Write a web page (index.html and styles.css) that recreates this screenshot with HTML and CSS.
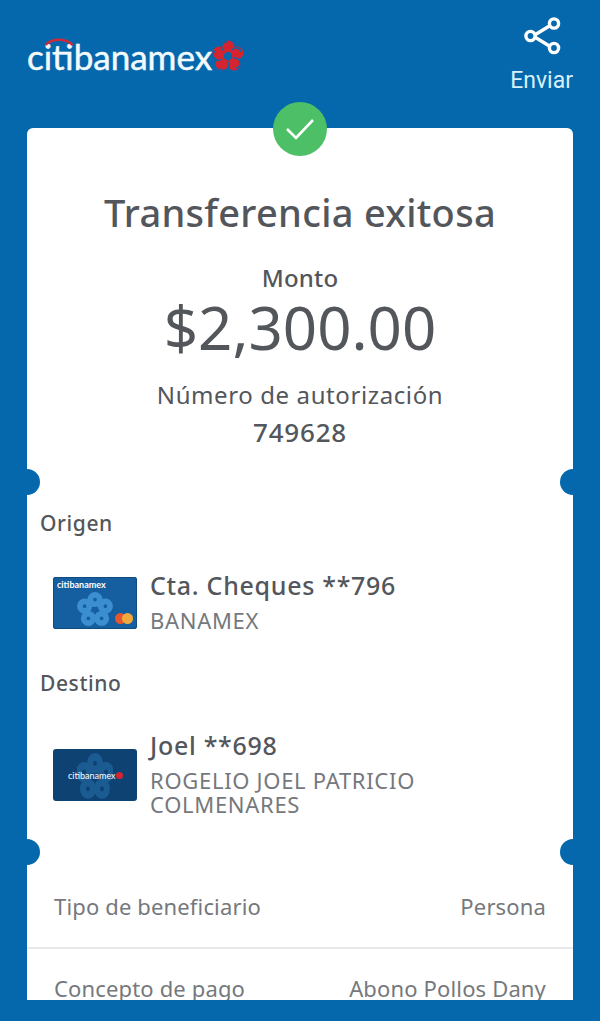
FILE: index.html
```html
<!DOCTYPE html>
<html lang="es">
<head>
    <meta charset="UTF-8">
    <title>Transferencia exitosa</title>
    <link rel="stylesheet" href="styles.css">
</head>
<body>
    <header class="top">
        <div class="logo">
            <svg class="logo-arc" width="30" height="9" viewBox="0 0 30 9"><path d="M1.5 8 C8 1 22 1 28.5 8" fill="none" stroke="#d2293a" stroke-width="2.4"/></svg>
            <span class="logo-text">citibanamex</span>
            <svg class="flower" width="32" height="32" viewBox="0 0 32 32">
                <g fill="#d5242f">
                    <circle cx="16" cy="7" r="6.4"/>
                    <circle cx="25" cy="13" r="6.4"/>
                    <circle cx="22" cy="24" r="6.4"/>
                    <circle cx="10" cy="24" r="6.4"/>
                    <circle cx="7" cy="13" r="6.4"/>
                </g>
                <circle cx="16" cy="16" r="4" fill="#0568ad"/>
                <g fill="none" stroke="#0568ad" stroke-width="1.3">
                    <path d="M16 2 A5 5 0 0 0 12 11"/>
                    <path d="M29 12 A5 5 0 0 0 20 10"/>
                    <path d="M24 28 A5 5 0 0 0 22 18"/>
                    <path d="M7 28 A5 5 0 0 0 16 22"/>
                    <path d="M3 11 A5 5 0 0 0 10 19"/>
                </g>
            </svg>
        </div>
        <div class="send">
            <svg width="40" height="40" viewBox="0 0 40 40" fill="none" stroke="#fff" stroke-width="3.4">
                <path d="M29 9 L11 20 L29 31"/>
                <circle cx="32" cy="7.5" r="4.6" fill="#0568ad"/>
                <circle cx="8.5" cy="20" r="4.6" fill="#0568ad"/>
                <circle cx="32" cy="32" r="4.6" fill="#0568ad"/>
            </svg>
            <span>Enviar</span>
        </div>
    </header>

    <main class="card-wrap">
        <div class="check">
            <svg width="32" height="26" viewBox="0 0 32 26"><path d="M3 13 L12 22 L29 4" fill="none" stroke="#fff" stroke-width="2.6"/></svg>
        </div>
        <span class="notch notch-l notch-1"></span>
        <span class="notch notch-r notch-1"></span>
        <span class="notch notch-l notch-2"></span>
        <span class="notch notch-r notch-2"></span>

        <div class="card">
            <section class="summary">
                <h1>Transferencia exitosa</h1>
                <p class="amount-label">Monto</p>
                <p class="amount">$2,300.00</p>
                <p class="auth-label">Número de autorización</p>
                <p class="auth-number">749628</p>
            </section>

            <section class="parties">
                <h2>Origen</h2>
                <div class="account">
                    <div class="bank-card bank-card-light">
                        <span class="bank-card-name">citibanamex</span>
                        <svg class="bank-card-flower" width="36" height="34" viewBox="0 0 36 36" fill="none" stroke="#3b8fd0" stroke-width="6">
                            <circle cx="18" cy="8" r="5"/>
                            <circle cx="29" cy="15" r="5"/>
                            <circle cx="25" cy="28" r="5"/>
                            <circle cx="11" cy="28" r="5"/>
                            <circle cx="7" cy="15" r="5"/>
                        </svg>
                        <span class="mc mc-red"></span>
                        <span class="mc mc-yellow"></span>
                    </div>
                    <div class="account-info">
                        <p class="account-name">Cta. Cheques **796</p>
                        <p class="account-owner">BANAMEX</p>
                    </div>
                </div>

                <h2>Destino</h2>
                <div class="account">
                    <div class="bank-card bank-card-dark">
                        <svg class="bank-card-flower" width="36" height="46" viewBox="0 0 36 36" preserveAspectRatio="none" fill="none" stroke="#1a5b92" stroke-width="6">
                            <circle cx="18" cy="8" r="5"/>
                            <circle cx="29" cy="15" r="5"/>
                            <circle cx="25" cy="28" r="5"/>
                            <circle cx="11" cy="28" r="5"/>
                            <circle cx="7" cy="15" r="5"/>
                        </svg>
                        <span class="bank-card-mark">citibanamex<i></i></span>
                    </div>
                    <div class="account-info">
                        <p class="account-name">Joel **698</p>
                        <p class="account-owner">ROGELIO JOEL PATRICIO COLMENARES</p>
                    </div>
                </div>
            </section>

            <section class="details">
                <div class="detail">
                    <span>Tipo de beneficiario</span>
                    <span>Persona</span>
                </div>
                <div class="detail">
                    <span>Concepto de pago</span>
                    <span>Abono Pollos Dany</span>
                </div>
            </section>
        </div>
    </main>
</body>
</html>
```

FILE: styles.css
```css
html, body {
    height: 100%;
}
body {
    margin: 0;
    background-color: #0568ad;
    font-family: 'Noto Sans', sans-serif;
    color: #53565b;
    overflow: hidden;
}
p, h1, h2 {
    margin: 0;
    font-weight: 400;
}
.top {
    height: 128px;
    box-sizing: border-box;
    padding: 0 27px;
    display: flex;
    justify-content: space-between;
    color: white;
}
.logo {
    position: relative;
    display: flex;
    align-items: center;
    height: 32px;
    margin-top: 40px;
}
.logo-arc {
    position: absolute;
    left: 17px;
    top: -3px;
}
.logo-text {
    font-family: 'Lato', sans-serif;
    font-size: 35px;
    font-weight: 400;
    -webkit-text-stroke: 0.5px #f2fafc;
    color: #f2fafc;
}
.flower {
    margin-left: 0;
}
.send {
    display: flex;
    flex-direction: column;
    align-items: center;
    padding-top: 16px;
    font-family: 'Roboto', sans-serif;
    font-size: 23px;
    line-height: 30px;
    color: #d8f0f8;
}
.send svg {
    display: block;
    margin-bottom: 10px;
}
.card-wrap {
    position: relative;
    margin: 0 27px;
}
.card {
    height: 872px;
    background-color: white;
    border-radius: 6px 6px 0 0;
    overflow: hidden;
}
.check {
    position: absolute;
    left: 246px;
    top: -26px;
    width: 54px;
    height: 54px;
    border-radius: 50%;
    background-color: #4dbf66;
    display: flex;
    align-items: center;
    justify-content: center;
}
.notch {
    position: absolute;
    width: 26px;
    height: 26px;
    border-radius: 50%;
    background-color: #0568ad;
}
.notch-l {
    left: -13px;
}
.notch-r {
    right: -13px;
}
.notch-1 {
    top: 341px;
}
.notch-2 {
    top: 711px;
}
.summary {
    text-align: center;
    padding-top: 59px;
}
.summary h1 {
    font-size: 38px;
    line-height: 50px;
    font-weight: 500;
    letter-spacing: 0.3px;
}
.amount-label {
    font-size: 24px;
    line-height: 32px;
    margin-top: 25px;
    font-weight: 500;
    letter-spacing: 0.2px;
}
.amount {
    font-size: 60px;
    line-height: 66px;
}
.auth-label {
    font-size: 24px;
    line-height: 32px;
    margin-top: 19px;
    letter-spacing: 0.6px;
}
.auth-number {
    font-size: 26px;
    line-height: 32px;
    margin-top: 5px;
    font-weight: 500;
    letter-spacing: 0.8px;
}
.parties {
    padding: 0 13px;
    margin-top: 60px;
}
.parties h2 {
    font-size: 21px;
    line-height: 30px;
    font-weight: 500;
    letter-spacing: 0.6px;
}
.account {
    display: flex;
    align-items: flex-start;
    margin-top: 30px;
    height: 100px;
    padding-left: 13px;
}
.account-info {
    margin-left: 13px;
}
.account-name {
    font-size: 25px;
    line-height: 34px;
    font-weight: 500;
    letter-spacing: 0.7px;
}
.account-owner {
    font-size: 22px;
    line-height: 24px;
    margin-top: 6px;
    color: #75787c;
    width: 330px;
    letter-spacing: 0.7px;
}
.bank-card {
    position: relative;
    width: 84px;
    height: 52px;
    flex-shrink: 0;
    border-radius: 3px;
    overflow: hidden;
    margin-top: 9px;
}
.bank-card-light {
    background-color: #155ea0;
    box-shadow: inset 0 0 0 1px #0f4a80;
}
.bank-card-dark {
    background-color: #0e4273;
    margin-top: 21px;
}
.bank-card-flower {
    position: absolute;
    left: 24px;
    top: 15px;
}
.bank-card-dark .bank-card-flower {
    top: 4px;
}
.bank-card-name {
    position: absolute;
    left: 4px;
    top: 2px;
    font-family: 'Lato', sans-serif;
    font-size: 9px;
    font-weight: 700;
    color: white;
}
.bank-card-mark {
    position: absolute;
    left: 15px;
    top: 21px;
    font-family: 'Lato', sans-serif;
    font-size: 9px;
    color: white;
}
.bank-card-mark i {
    display: inline-block;
    width: 7px;
    height: 7px;
    border-radius: 50%;
    background-color: #d5242f;
}
.mc {
    position: absolute;
    top: 36px;
    width: 11px;
    height: 11px;
    border-radius: 50%;
}
.mc-red {
    left: 62px;
    background-color: #e4572e;
}
.mc-yellow {
    left: 69px;
    background-color: #f2a93b;
}
.details {
    margin-top: 39px;
}
.detail {
    display: flex;
    justify-content: space-between;
    padding: 0 27px;
    height: 82px;
    box-sizing: border-box;
    padding-top: 24px;
    font-size: 22px;
    line-height: 30px;
    letter-spacing: 0.15px;
    color: #75787c;
    border-bottom: 2px solid #e8e9ea;
}
.detail:last-child {
    border-bottom: none;
}
```
